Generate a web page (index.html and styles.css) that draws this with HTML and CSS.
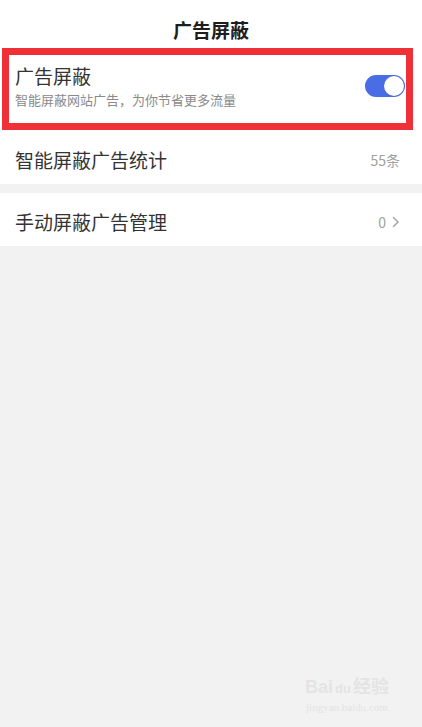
FILE: index.html
```html
<!DOCTYPE html>
<html lang="zh-CN">
<head>
    <meta charset="UTF-8">
    <meta name="viewport" content="width=device-width, initial-scale=1.0">
    <title>广告屏蔽</title>
    <link rel="stylesheet" href="styles.css">
</head>
<body>

<div class="page">
  <div class="topbar">
    <h1>广告屏蔽</h1>
  </div>

  <div class="row row-main">
    <div class="row-text">
      <div class="row-title">广告屏蔽</div>
      <div class="row-desc">智能屏蔽网站广告，为你节省更多流量</div>
    </div>
    <div class="switch on"><span class="knob"></span></div>
    <div class="mark"></div>
  </div>

  <div class="row row-simple">
    <div class="row-title">智能屏蔽广告统计</div>
    <div class="row-value">55条</div>
  </div>

  <div class="row row-simple row-gap">
    <div class="row-title">手动屏蔽广告管理</div>
    <div class="row-value">0
      <svg class="chevron" width="8" height="12" viewBox="0 0 8 12">
        <path d="M1.5 1.5 L6 6 L1.5 10.5" fill="none" stroke="#a8a8a8" stroke-width="1.6" stroke-linecap="round" stroke-linejoin="round"/>
      </svg>
    </div>
  </div>

  <div class="watermark">
    <div class="wm-logo">Bai<span class="wm-du">du</span>经验</div>
    <div class="wm-url">jingyan.baidu.com</div>
  </div>
</div>

</body>
</html>
```

FILE: styles.css
```css
* {
  box-sizing: border-box;
}

body {
  margin: 0;
  background-color: #f2f2f2;
  font-family: "Noto Sans CJK SC", "Noto Sans", sans-serif;
}

.page {
  position: relative;
  width: 422px;
  height: 727px;
  overflow: hidden;
}

.topbar {
  height: 48px;
  background-color: #fff;
  display: flex;
  align-items: center;
  justify-content: center;
}

.topbar h1 {
  margin: 0 0 -10px 0;
  font-size: 19px;
  font-weight: bold;
  color: #1e1e1e;
}

.row {
  display: flex;
  align-items: center;
  background-color: #fff;
  padding: 0 22px 0 15px;
}

.row-main {
  position: relative;
  height: 82px;
  padding-right: 17px;
}

.row-text {
  flex: 1;
}

.row-title {
  font-size: 19px;
  line-height: 24px;
  color: #333;
}

.row-main .row-title {
  margin-top: -6px;
}

.row-desc {
  margin-top: 3px;
  font-size: 13px;
  line-height: 18px;
  color: #8a8a8a;
}

/* toggle */
.switch {
  width: 40px;
  height: 22px;
  border-radius: 11px;
  background-color: #4a6de5;
  position: relative;
  margin-top: -6px;
}

.switch .knob {
  position: absolute;
  top: 1px;
  right: 1px;
  width: 20px;
  height: 20px;
  border-radius: 50%;
  background-color: #fff;
  box-shadow: 0 0 1px rgba(0, 0, 0, 0.3);
}

/* red highlight frame drawn over the first row */
.mark {
  position: absolute;
  left: 2px;
  right: 9px;
  top: 0;
  bottom: 0;
  border: 7px solid #ef3036;
}

.row-simple {
  height: 54px;
  justify-content: space-between;
}

.row-simple .row-title {
  margin-top: 5px;
}

.row-gap {
  margin-top: 9px;
  height: 53px;
}

.row-value {
  margin-top: 5px;
  font-size: 14px;
  color: #a0a0a0;
  display: flex;
  align-items: center;
  gap: 6px;
}

.watermark {
  position: absolute;
  left: 305px;
  top: 676px;
  color: #e4e4e4;
  text-align: center;
}

.wm-logo {
  font-family: "Liberation Sans", "Noto Sans CJK SC", sans-serif;
  font-size: 18px;
  font-weight: bold;
  line-height: 22px;
}

.wm-du {
  display: inline-block;
  margin: 0 2px;
  font-size: 13px;
}

.wm-url {
  font-family: "Liberation Serif", serif;
  font-size: 11px;
  line-height: 14px;
}
```
